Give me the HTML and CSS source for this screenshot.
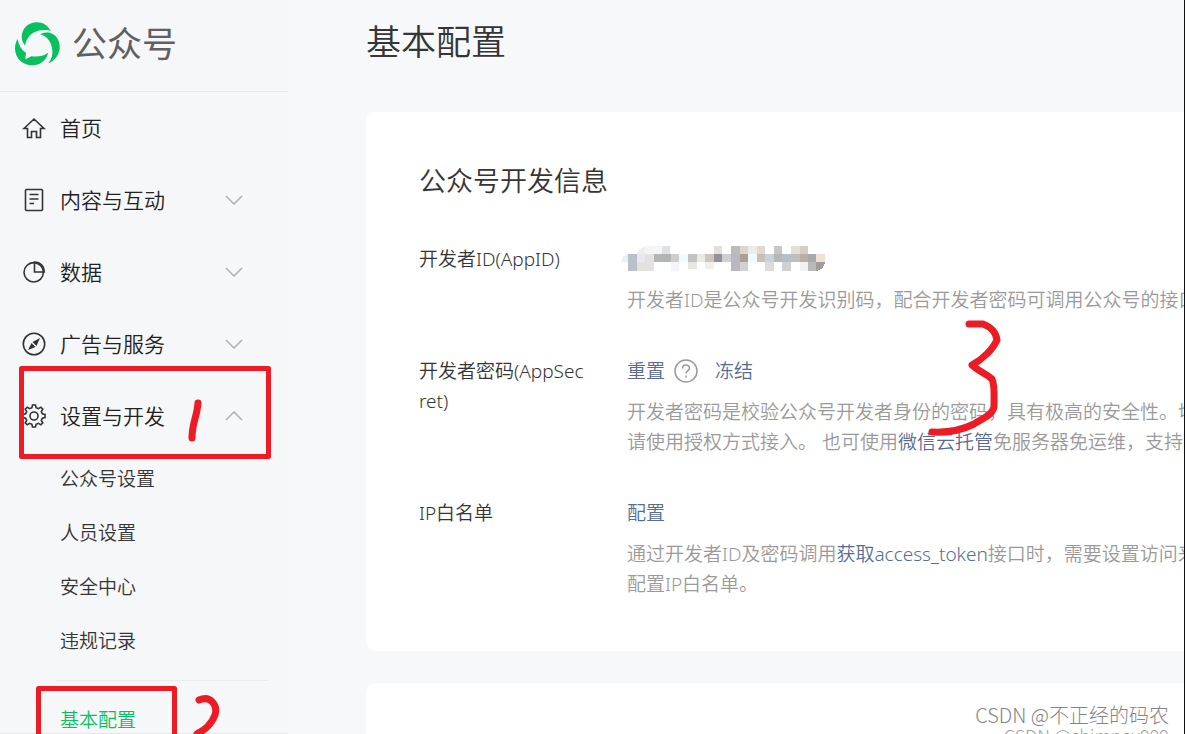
FILE: index.html
```html
<!DOCTYPE html>
<html lang="zh-CN">
<head>
<meta charset="utf-8">
<title>公众号 - 基本配置</title>
<link rel="stylesheet" href="styles.css">
</head>
<body>
<div class="app">
  <aside class="sidebar">
    <header class="brand">
      <svg class="brand-logo" viewBox="0 0 46 46" fill="#07c160" aria-hidden="true">
        <path d="M11 24.500C9 22 7.700 19 7.700 15.700 7.700 8 14 1.200 22.700 1.200c6.500 0 11 3.300 14 8.500C34 8.800 29 8.700 25 9.600 17 11.500 12.500 17 11 24.500z"/>
        <path d="M26 13.300c3-1.600 6.500-2.200 10-1.600 6 2 9.700 7.500 9.700 14 0 8-4.700 14-11.400 16.600 3.300-4 4.500-8.300 4-13.300C37.500 21 33 15 26 13.300z"/>
        <path d="M3.700 18c.8 6 3.500 10.500 8.300 14l-.6 5c-.1.800.6 1.200 1.300.8l4.600-2.600c5.700 1 11.700.3 17-3.400C32 40 26 44.300 18.300 44.300 8.500 44.300 1 37 1 27.300 1 24 2 20.500 3.700 18z"/>
      </svg>
      <span class="brand-name">公众号</span>
    </header>
    <nav class="menu">
      <a class="item" href="#">
        <svg class="icon" viewBox="0 0 24 24"><path d="M2 12.500 12 3l10 9.500h-3.500V21.500h-4v-6h-5v6h-4v-9z"/></svg>
        <span>首页</span>
      </a>
      <a class="item" href="#">
        <svg class="icon" viewBox="0 0 24 24"><rect x="3.500" y="1.500" width="17" height="21" rx="1"/><path d="M7.500 6.500h9M7.500 11h9M7.500 15.500h4.500"/></svg>
        <span>内容与互动</span>
        <svg class="chevron" viewBox="0 0 18 10"><path d="m1 1 8 8 8-8"/></svg>
      </a>
      <a class="item" href="#">
        <svg class="icon" viewBox="0 0 24 24"><circle cx="11.700" cy="12.300" r="9.700"/><path d="M12.500 2v10h9.700c0-6-4-10-9.700-10z"/></svg>
        <span>数据</span>
        <svg class="chevron" viewBox="0 0 18 10"><path d="m1 1 8 8 8-8"/></svg>
      </a>
      <a class="item" href="#">
        <svg class="icon" viewBox="0 0 24 24"><circle cx="12" cy="12" r="10.700"/><path class="solid" d="M18 6 14.500 14l-4-4zM6 18l3.500-7 4 4z"/></svg>
        <span>广告与服务</span>
        <svg class="chevron" viewBox="0 0 18 10"><path d="m1 1 8 8 8-8"/></svg>
      </a>
      <a class="item" href="#">
        <svg class="icon" viewBox="0 0 24 24"><path d="m10.500 1-.6 2.700-2.400 1L5.200 3.200 3.200 5.200l1.500 2.300-1 2.400L1 10.500v3l2.700.6 1 2.400-1.500 2.300 2 2 2.300-1.500 2.400 1 .6 2.700h3l.6-2.700 2.400-1 2.300 1.500 2-2-1.500-2.300 1-2.400 2.700-.6v-3l-2.700-.6-1-2.400 1.500-2.300-2-2-2.300 1.500-2.400-1-.6-2.700z"/><circle cx="12" cy="12" r="4"/></svg>
        <span>设置与开发</span>
        <svg class="chevron" viewBox="0 0 18 10"><path d="m1 9 8-8 8 8"/></svg>
      </a>
      <div class="submenu">
        <a class="subitem" href="#">公众号设置</a>
        <a class="subitem" href="#">人员设置</a>
        <a class="subitem" href="#">安全中心</a>
        <a class="subitem" href="#">违规记录</a>
        <hr class="divider">
        <a class="subitem active" href="#">基本配置</a>
      </div>
    </nav>
  </aside>

  <main class="main">
    <h1 class="page-title">基本配置</h1>
    <section class="card">
      <h2 class="card-title">公众号开发信息</h2>
      <div class="fields">
        <div class="label">开发者ID(AppID)</div>
        <div class="value">
          <svg class="mosaic" viewBox="0 0 206 30" shape-rendering="crispEdges" aria-hidden="true">
            <path fill="#e6f1f9" d="M1 18q1-7 7-8v8z"/>
            <path fill="#eceef2" d="M17 10q1-6 8-7v7z"/>
            <g transform="translate(0 1)">
              <path fill="#bcc0cb" d="M8 9h9v17H8z"/><path fill="#e8eaef" d="M17 9h8v8h-8z"/><path fill="#f4f5f4" d="M25 1h17v8H25z"/><path fill="#dee2e6" d="M42 1h8v8h-8z"/>
              <path fill="#e3e2e1" d="M17 17h8v9h-8zM25 9h9v17h-9z"/><path fill="#b3b4b4" d="M34 9h17v8H34z"/><path fill="#cfcecd" d="M51 9h8v8h-8z"/><path fill="#f4f5fa" d="M51 17h8v9h-8z"/><path fill="#f1faff" d="M59 9h9v8h-9z"/>
              <path fill="#c3c2c2" d="M68 9h9v8h-9z"/><path fill="#e9e7e6" d="M68 17h9v7h-9z"/><path fill="#e6ebe3" d="M77 9h8v8h-8z"/><path fill="#cdc5c1" d="M85 9h9v8h-9z"/><path fill="#f3eeec" d="M85 17h9v7h-9z"/>
              <path fill="#e4dedc" d="M94 1h8v8h-8z"/><path fill="#939298" d="M94 9h8v8h-8z"/><path fill="#cfcfd4" d="M102 9h9v8h-9z"/><path fill="#bcbbb8" d="M111 1h9v8h-9z"/><path fill="#b9b7bf" d="M111 9h9v17h-9z"/><path fill="#d8d5d3" d="M120 1h8v8h-8z"/><path fill="#ae9f95" d="M120 9h8v8h-8z"/><path fill="#d0d2d2" d="M120 17h8v9h-8z"/>
              <path fill="#eeeae5" d="M128 1h9v8h-9z"/><path fill="#effaff" d="M128 9h9v8h-9z"/><path fill="#dfd9d4" d="M137 1h8v8h-8z"/><path fill="#cbbeb8" d="M137 9h8v8h-8z"/><path fill="#c9d2da" d="M145 9h9v8h-9z"/><path fill="#dddcda" d="M145 17h9v9h-9z"/>
              <path fill="#c5c6c5" d="M154 1h8v8h-8z"/><path fill="#b6b6b3" d="M154 9h8v8h-8z"/><path fill="#b6bfc8" d="M162 9h9v8h-9z"/><path fill="#cfd0d0" d="M162 17h9v9h-9z"/><path fill="#e3e0dc" d="M171 1h9v8h-9z"/><path fill="#c0bfbe" d="M171 9h9v8h-9z"/><path fill="#d8cbbf" d="M180 1h8v8h-8z"/><path fill="#bcaea4" d="M180 9h8v8h-8z"/><path fill="#f1f1ef" d="M180 17h8v9h-8z"/>
              <path fill="#a7aaac" d="M188 9h8v8h-8z"/><path fill="#b5bbbd" d="M188 17h8v9h-8z"/><path fill="#f0e1d1" d="M196 9h9v8h-9z"/><path fill="#a19c9c" d="M196 17h9q-1 8-9 9z"/>
            </g>
          </svg>
          <p class="hint">开发者ID是公众号开发识别码，配合开发者密码可调用公众号的接口</p>
        </div>

        <div class="label">开发者密码(AppSecret)</div>
        <div class="value">
          <div class="actions">
            <a href="#">重置</a>
            <svg class="help" viewBox="0 0 24 24" aria-hidden="true"><circle cx="12" cy="12" r="11"/><path d="M8.500 9.500c0-4.500 7-4.500 7-.3 0 2.600-3.500 2.700-3.500 5.300M12 16.500v2"/></svg>
            <a href="#">冻结</a>
          </div>
          <p class="hint">开发者密码是校验公众号开发者身份的密码，具有极高的安全性。切<br>请使用授权方式接入。 也可使用<a href="#">微信云托管</a>免服务器免运维，支持免</p>
        </div>

        <div class="label">IP白名单</div>
        <div class="value">
          <div class="actions"><a href="#">配置</a></div>
          <p class="hint">通过开发者ID及密码调用<a href="#">获取access_token</a>接口时，需要设置访问来<br>配置IP白名单。</p>
        </div>
      </div>
    </section>
    <section class="card next-card"></section>
  </main>

  <svg class="marks" viewBox="0 0 1185 734" aria-hidden="true">
    <rect x="21.500" y="368.500" width="247" height="88"/>
    <path d="M38.500 740V688.500H174.500V740"/>
    <path class="thick" d="M198 403c-1 14-6 20-6 35"/>
    <path class="thick" d="M199 700c12-5 19 6 16 15-3 8-10 15-18 19"/>
    <path class="thick" d="M969 324h14c8 3 13 9 14 16-4 9-14 19-25 25 6 6 15 9 20 14 3 6 2 18 2 28-2 9-13 12-20 17-12 6-24 9-42 8"/>
  </svg>
  <div class="watermark">
    <span class="mark-main">CSDN @不正经的码农</span>
    <span class="mark-sub">CSDN @chimney999</span>
  </div>
</div>
</body>
</html>
```
FILE: styles.css
```css
* { box-sizing: border-box; }

body {
  margin: 0;
  background: #f6f7f9;
  color: #353535;
  font-family: "Noto Sans", "Noto Sans CJK SC", sans-serif;
  font-size: 19px;
  font-weight: 350;
  line-height: 30px;
}

a { color: #576b95; text-decoration: none; }
h1, h2, p { margin: 0; font-weight: inherit; }

.app {
  position: relative;
  display: flex;
  height: 100vh;
  overflow: hidden;
  border-right: 1px solid #111;
}

.sidebar {
  flex: 0 0 288px;
  border-bottom: 1px solid #e7e8eb;
  overflow: hidden;
}

.brand {
  display: flex;
  align-items: center;
  gap: 12px;
  height: 92px;
  padding: 0 14px 4px;
  border-bottom: 1px solid #eaebee;
}
.brand-logo { width: 46px; height: 46px; }
.brand-name {
  color: #606060;
  font-size: 35px;
  font-weight: 400;
  line-height: 48px;
}

.item {
  display: flex;
  align-items: center;
  gap: 14px;
  height: 72px;
  padding: 0 45px 0 22px;
  color: #222;
  font-size: 21px;
}
.icon {
  width: 24px;
  height: 24px;
  fill: none;
  stroke: #333;
  stroke-width: 1.6;
}
.icon .solid { fill: #333; stroke: none; }
.chevron {
  width: 18px;
  height: 10px;
  margin-left: auto;
  fill: none;
  stroke: #b2b2b2;
  stroke-width: 1.6;
}

.submenu {
  display: flex;
  flex-direction: column;
  padding-right: 20px;
}
.subitem {
  padding: 12px 0 12px 60px;
  color: #353535;
}
.subitem.active { color: #07c160; }
.divider {
  width: 212px;
  margin: 12px 0 12px auto;
  border: 0;
  border-top: 1px solid #eaebee;
}

.main {
  flex: 1;
  min-width: 0;
  padding: 18px 0 0 78px;
  overflow: hidden;
  background: #f7f8fa;
}
.page-title {
  margin-bottom: 46px;
  font-size: 35px;
  line-height: 48px;
}
.card {
  padding: 53px 0 52px 53px;
  border-radius: 10px 0 0 10px;
  background: #fff;
  overflow: hidden;
}
.next-card { height: 200px; margin-top: 32px; }
.card-title {
  margin-bottom: 47px;
  font-size: 27px;
  line-height: 32px;
}

.fields {
  display: grid;
  grid-template-columns: 169px 1fr;
  column-gap: 39px;
  row-gap: 41px;
}
.label { word-break: break-all; }
.value {
  display: flex;
  flex-direction: column;
  gap: 11px;
  min-width: 0;
}
.mosaic {
  width: 206px;
  height: 30px;
  margin-left: -7px;
}
.actions { display: flex; align-items: center; }
.help {
  width: 24px;
  height: 24px;
  margin: 0 17px 0 9px;
  fill: none;
  stroke: #9a9a9a;
  stroke-width: 1.5;
}
.hint { color: #9a9a9a; white-space: nowrap; }

.marks {
  position: absolute;
  top: 0;
  left: 0;
  width: 1185px;
  height: 734px;
  fill: none;
  stroke: #ed1c24;
  stroke-width: 5;
  stroke-linecap: round;
  stroke-linejoin: round;
  pointer-events: none;
}
.marks .thick { stroke-width: 7; }

.watermark {
  position: absolute;
  right: 15px;
  bottom: -7px;
  display: flex;
  flex-direction: column;
  align-items: flex-end;
  color: #858585;
  font-family: "Noto Sans CJK SC", sans-serif;
  font-weight: 300;
}
.mark-main { font-size: 20px; line-height: 28px; }
.mark-sub { color: #a0a0a0; font-size: 18px; line-height: 12px; }
```
